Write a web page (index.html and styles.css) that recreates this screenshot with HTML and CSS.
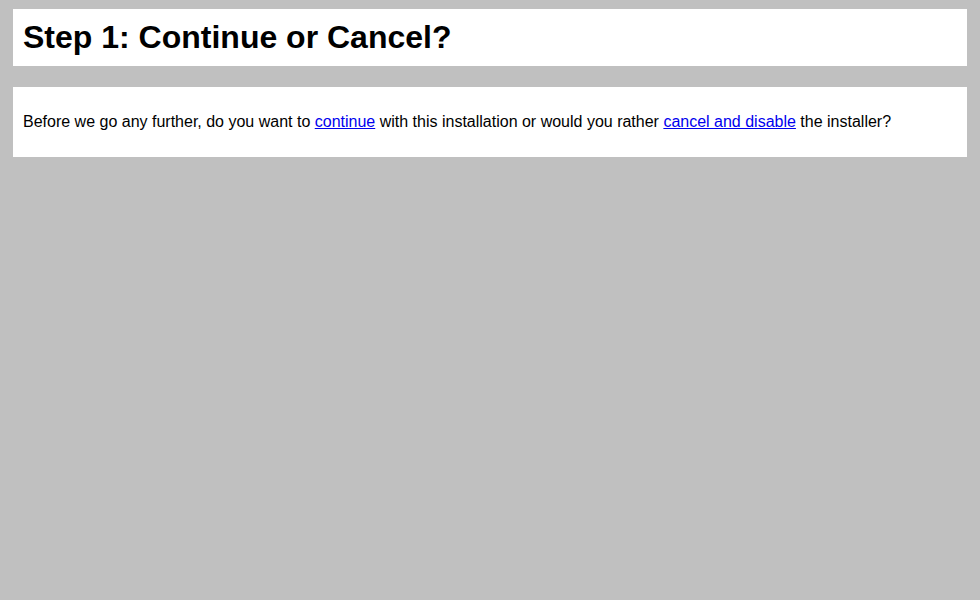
FILE: index.html
```html
<!DOCTYPE html>
<html>
<head>
<meta charset="utf-8">
<link rel="stylesheet" href="styles.css">
</head>
<body class="page">
<div class="box header">
<h1 class="title">Step 1: Continue or Cancel?</h1>
</div>
<div class="box content">
<p class="text">Before we go any further, do you want to <a href="#" class="link">continue</a> with this installation or would you rather <a href="#" class="link">cancel and disable</a> the installer?</p>
</div>
</body>
</html>
```

FILE: styles.css
```css
html { background: #c0c0c0; }
body.page {
  margin: 0;
  padding: 9px 13px;
  font-family: "Liberation Sans", Arial, sans-serif;
  color: #000;
  display: flex;
  flex-direction: column;
  gap: 21px;
}
.box {
  background: #fff;
  padding: 0 10px;
}
.title {
  margin: 0;
  font-size: 32px;
  font-weight: bold;
  line-height: 57px;
}
.content { padding: 10px; }
.text {
  margin: 16px 0;
  font-size: 16px;
  line-height: 18px;
}
.link { color: #0000ee; }
```
